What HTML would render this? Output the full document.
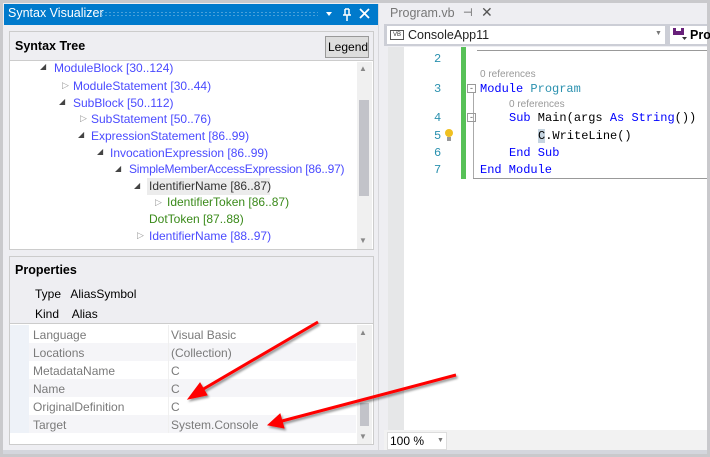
<!DOCTYPE html>
<html><head><style>
*{margin:0;padding:0;box-sizing:border-box}
body{width:710px;height:457px;overflow:hidden;background:#c9c9cc;font-family:"Liberation Sans",sans-serif;font-size:12px;position:relative}
.a{position:absolute}
.t{position:absolute;white-space:nowrap}
.mono{font-family:"Liberation Mono",monospace;font-size:12px}
</style></head><body>
<div class="a" style="left:3px;top:3px;width:704px;height:451px;background:#eeeef2"></div>
<!-- left panel -->
<div class="a" style="left:4px;top:4px;width:374px;height:21px;background:#007acc"></div>
<div class="t" style="left:8px;top:6px;color:#fff;font-size:12.5px">Syntax Visualizer</div>
<div class="a" style="left:100px;top:11px;width:218px;height:5px;background-image:radial-gradient(#4da2db 0.8px,transparent 1px);background-size:4px 3px"></div>
<svg class="a" style="left:324px;top:8px" width="50" height="14">
<polygon points="2,4 8,4 5,8" fill="#fff"/>
<path d="M21 1v6M25 1v6M19 7h8M23 7v6M21 1h4" stroke="#fff" stroke-width="1.5" fill="none"/>
<path d="M36 1l9 9M45 1l-9 9" stroke="#fff" stroke-width="1.8"/>
</svg>
<div class="a" style="left:4px;top:25px;width:374px;height:429px;background:#eeeef2"></div>
<div class="a" style="left:9px;top:31px;width:365px;height:219px;border:1px solid #ccc;background:#fff"></div>
<div class="a" style="left:10px;top:32px;width:363px;height:29px;background:#eeeef2;border-bottom:1px solid #ccc"></div>
<div class="t" style="left:15px;top:39px;font-weight:bold;font-size:12.5px">Syntax Tree</div>
<div class="a" style="left:325px;top:36px;width:44px;height:22px;border:1px solid #999;background:#ddd"></div>
<div class="t" style="left:328px;top:40px;font-size:12px">Legend</div>
<div class="a" style="left:357px;top:62px;width:15px;height:187px;background:#f0f0f0"></div>
<div class="a" style="left:359px;top:100px;width:10px;height:96px;background:#c2c3c9"></div>
<div class="t" style="left:359px;top:64px;color:#888;font-size:8px">▲</div>
<div class="t" style="left:359px;top:236px;color:#888;font-size:8px">▼</div>
<div class="a" style="left:10px;top:62px;width:346px;height:187px;overflow:hidden;font-size:12px;color:#4a4aff">
<div class="t" style="left:30px;top:0px;color:#444;font-size:8px">◢</div><div class="t" style="left:44px;top:-1px">ModuleBlock [30..124)</div>
<div class="t" style="left:52px;top:18px;color:#999;font-size:9px">▷</div><div class="t" style="left:63px;top:17px">ModuleStatement [30..44)</div>
<div class="t" style="left:49px;top:35px;color:#444;font-size:8px">◢</div><div class="t" style="left:63px;top:34px">SubBlock [50..112)</div>
<div class="t" style="left:70px;top:51px;color:#999;font-size:9px">▷</div><div class="t" style="left:81px;top:50px">SubStatement [50..76)</div>
<div class="t" style="left:68px;top:68px;color:#444;font-size:8px">◢</div><div class="t" style="left:81px;top:67px">ExpressionStatement [86..99)</div>
<div class="t" style="left:87px;top:85px;color:#444;font-size:8px">◢</div><div class="t" style="left:100px;top:84px">InvocationExpression [86..99)</div>
<div class="t" style="left:105px;top:102px;color:#444;font-size:8px">◢</div><div class="t" style="left:119px;top:100px;letter-spacing:-0.2px">SimpleMemberAccessExpression [86..97)</div>
<div class="a" style="left:137px;top:116px;width:123px;height:17px;background:#ececec"></div>
<div class="t" style="left:124px;top:119px;color:#444;font-size:8px">◢</div><div class="t" style="left:139px;top:117px;color:#333">IdentifierName [86..87)</div>
<div class="t" style="left:145px;top:135px;color:#999;font-size:9px">▷</div><div class="t" style="left:157px;top:133px;color:#3a8a1a">IdentifierToken [86..87)</div>
<div class="t" style="left:139px;top:150px;color:#3a8a1a">DotToken [87..88)</div>
<div class="t" style="left:127px;top:168px;color:#999;font-size:9px">▷</div><div class="t" style="left:139px;top:167px">IdentifierName [88..97)</div>
</div>
<!-- properties -->
<div class="a" style="left:9px;top:256px;width:365px;height:189px;border:1px solid #ccc;background:#fff"></div>
<div class="a" style="left:10px;top:257px;width:363px;height:67px;background:#eeeef2;border-bottom:1px solid #ccc"></div>
<div class="t" style="left:15px;top:263px;font-weight:bold;font-size:12.5px">Properties</div>
<div class="t" style="left:35px;top:287px">Type&nbsp;&nbsp; AliasSymbol</div>
<div class="t" style="left:35px;top:307px">Kind&nbsp;&nbsp;&nbsp; Alias</div>
<div class="a" style="left:10px;top:325px;width:19px;height:108px;background:#eef2f8"></div>
<div class="a" style="left:29px;top:343px;width:327px;height:18px;background:#f5f5f8"></div>
<div class="a" style="left:29px;top:379px;width:327px;height:18px;background:#f5f5f8"></div>
<div class="a" style="left:29px;top:415px;width:327px;height:18px;background:#f5f5f8"></div>
<div class="a" style="left:168px;top:325px;width:1px;height:108px;background:#f0f0f0"></div>
<div class="a" style="left:357px;top:325px;width:15px;height:119px;background:#f0f0f0"></div>
<div class="a" style="left:360px;top:403px;width:9px;height:23px;background:#c2c3c9"></div>
<div class="t" style="left:359px;top:328px;color:#888;font-size:8px">▲</div>
<div class="t" style="left:359px;top:432px;color:#888;font-size:8px">▼</div>
<div style="color:#7a7a7a">
<div class="t" style="left:33px;top:328px">Language</div><div class="t" style="left:171px;top:328px">Visual Basic</div>
<div class="t" style="left:33px;top:346px">Locations</div><div class="t" style="left:171px;top:346px">(Collection)</div>
<div class="t" style="left:33px;top:364px">MetadataName</div><div class="t" style="left:171px;top:364px">C</div>
<div class="t" style="left:33px;top:382px">Name</div><div class="t" style="left:171px;top:382px">C</div>
<div class="t" style="left:33px;top:400px">OriginalDefinition</div><div class="t" style="left:171px;top:400px">C</div>
<div class="t" style="left:33px;top:418px">Target</div><div class="t" style="left:171px;top:418px">System.Console</div>
</div>
<!-- right -->
<div class="a" style="left:378px;top:4px;width:1px;height:446px;background:#d8d8dc"></div>
<div class="a" style="left:381px;top:4px;width:326px;height:21px;background:#eeeef2"></div>
<div class="t" style="left:390px;top:6px;color:#777;font-size:12.5px">Program.vb</div>
<div class="t" style="left:463px;top:6px;color:#555;font-size:11px">⊣</div>
<div class="t" style="left:481px;top:4px;color:#555;font-size:14px">✕</div>
<div class="a" style="left:384px;top:24px;width:323px;height:22px;background:#ccced6"></div>
<div class="a" style="left:387px;top:26px;width:278px;height:18px;background:#fff"></div>
<div class="a" style="left:390px;top:30px;width:14px;height:10px;border:1px solid #555;font-size:6px;line-height:8px;text-align:center;color:#333">VB</div>
<div class="t" style="left:408px;top:28px;font-size:12.5px;color:#222">ConsoleApp11</div>
<div class="t" style="left:655px;top:30px;color:#777;font-size:7px">▼</div>
<div class="a" style="left:670px;top:26px;width:37px;height:18px;background:#fff"></div>
<svg class="a" style="left:672px;top:27px" width="16" height="14"><path d="M1 1h3v3h5V1h3v7H1z" fill="#68217a"/><polygon points="10,10 15,10 12.5,13" fill="#333"/></svg>
<div class="t" style="left:690px;top:28px;font-weight:bold;font-size:12.5px">Pro</div>
<div class="a" style="left:388px;top:47px;width:319px;height:383px;background:#fff"></div>
<div class="a" style="left:388px;top:47px;width:16px;height:383px;background:#e6e7e8"></div>
<div class="a" style="left:461px;top:47px;width:5px;height:132px;background:#57c157"></div>
<div class="a" style="left:477px;top:50px;width:230px;height:1px;background:#999"></div>
<div class="a" style="left:473px;top:178px;width:234px;height:1px;background:#999"></div>
<div class="a" style="left:473px;top:92px;width:1px;height:86px;background:#aaa"></div>
<div style="color:#2b91af" class="mono">
<div class="t" style="left:434px;top:52px">2</div>
<div class="t" style="left:434px;top:82px">3</div>
<div class="t" style="left:434px;top:111px">4</div>
<div class="t" style="left:434px;top:129px">5</div>
<div class="t" style="left:434px;top:146px">6</div>
<div class="t" style="left:434px;top:163px">7</div>
</div>
<svg class="a" style="left:444px;top:128px" width="10" height="14"><circle cx="5" cy="5" r="4" fill="#f0c020"/><rect x="3" y="9" width="4" height="4" fill="#999"/></svg>
<div class="t" style="left:480px;top:69px;color:#999;font-size:10px">0 references</div>
<div class="t" style="left:509px;top:99px;color:#999;font-size:10px">0 references</div>
<div class="a" style="left:467px;top:84px;width:9px;height:9px;border:1px solid #999;font-size:9px;line-height:6px;text-align:center;color:#555">-</div>
<div class="a" style="left:467px;top:113px;width:9px;height:9px;border:1px solid #999;font-size:9px;line-height:6px;text-align:center;color:#555">-</div>
<div class="mono" style="color:#000">
<div class="t" style="left:480px;top:82px"><span style="color:#0000ff">Module</span> <span style="color:#2b91af">Program</span></div>
<div class="t" style="left:509px;top:111px"><span style="color:#0000ff">Sub</span> Main(args <span style="color:#0000ff">As</span> <span style="color:#0000ff">String</span>())</div>
<div class="t" style="left:538px;top:129px"><span style="background:#c5d4e0">C</span>.WriteLine()</div>
<div class="t" style="left:509px;top:146px;color:#0000ff">End Sub</div>
<div class="t" style="left:480px;top:163px;color:#0000ff">End Module</div>
</div>
<div class="a" style="left:384px;top:430px;width:323px;height:20px;background:#f2f2f2"></div>
<div class="a" style="left:387px;top:432px;width:60px;height:18px;background:#fff;border:1px solid #ddd"></div>
<div class="t" style="left:390px;top:434px;font-size:12px">100 %</div>
<div class="t" style="left:437px;top:437px;color:#777;font-size:7px">▼</div>
<div class="a" style="left:3px;top:450px;width:704px;height:4px;background:#d4d6dd"></div>
<!-- arrows -->
<svg class="a" style="left:0;top:0" width="710" height="457">
<defs><filter id="s"><feDropShadow dx="1.5" dy="2" stdDeviation="1" flood-color="#000" flood-opacity="0.4"/></filter></defs>
<g filter="url(#s)" fill="#f00" stroke="#f00">
<line x1="318" y1="322" x2="200" y2="391" stroke-width="3"/>
<polygon points="188,399 200,383 207,395" stroke-width="1"/>
<line x1="456" y1="375" x2="282" y2="421" stroke-width="3"/>
<polygon points="268,425 280,414 284,428" stroke-width="1"/>
</g></svg>
</body></html>
